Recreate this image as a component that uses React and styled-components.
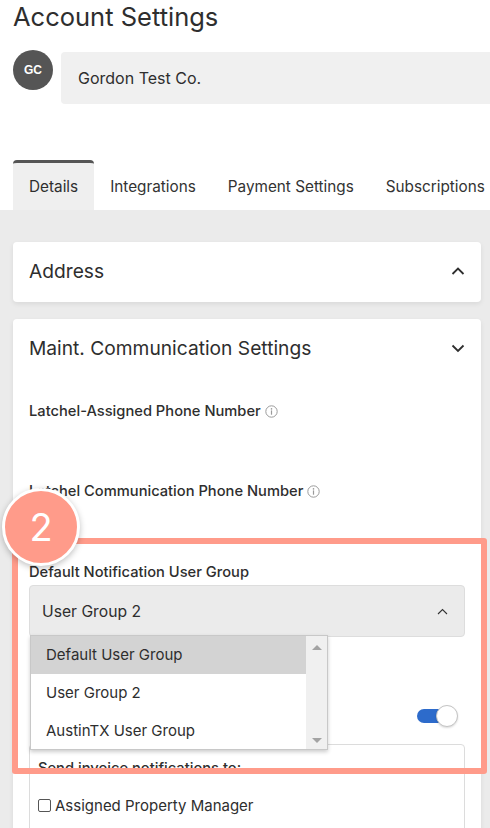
import styled, { createGlobalStyle } from 'styled-components';

const GlobalStyle = createGlobalStyle`
  html, body {
    margin: 0;
    padding: 0;
    background: #ebebeb;
  }
  body {
    font-family: Inter, "Noto Sans", sans-serif;
    color: #2e2e2e;
    overflow: hidden;
  }
`;

const Page = styled.div`
  width: 490px;
  height: 828px;
  overflow: hidden;
  position: relative;
  background: #ebebeb;
`;

const Top = styled.header`
  background: #fff;
  padding: 0 0 0 13px;
`;

const Title = styled.h1`
  margin: 0;
  font-size: 25.5px;
  line-height: 34px;
  font-weight: 400;
  color: #2e2e2e;
`;

const AccountRow = styled.div`
  display: flex;
  align-items: flex-start;
  gap: 8px;
  margin-top: 18px;
`;

const Avatar = styled.div`
  width: 40px;
  height: 40px;
  flex: none;
  margin-top: -2px;
  border-radius: 50%;
  background: #555;
  color: #fff;
  font-family: Arial, "Liberation Sans", sans-serif;
  font-weight: 700;
  font-size: 12px;
  display: flex;
  align-items: center;
  justify-content: center;
`;

const NameField = styled.div`
  flex: 1;
  height: 52px;
  background: #f0f0f0;
  border-radius: 4px 0 0 4px;
  display: flex;
  align-items: center;
  padding-left: 17px;
  font-size: 16px;
`;

const Tabs = styled.nav`
  display: flex;
  margin-top: 56px;
  height: 50px;
`;

const Tab = styled.div`
  display: flex;
  align-items: center;
  padding: 0 16px;
  font-size: 15.3px;
  color: ${(p) => (p.active ? '#2e2e2e' : '#333')};
  background: ${(p) => (p.active ? '#efefef' : 'transparent')};
  border-top: 3px solid ${(p) => (p.active ? '#555' : 'transparent')};
  border-radius: ${(p) => (p.active ? '4px 4px 0 0' : '0')};
  white-space: nowrap;
`;

const Body = styled.main`
  padding: 32px 9px 0 13px;
  display: flex;
  flex-direction: column;
  gap: 17px;
`;

const Card = styled.section`
  background: #fff;
  border-radius: 4px;
  box-shadow: 0 2px 5px rgba(0, 0, 0, 0.08);
  padding: 0 16px;
`;

const CardHeader = styled.div`
  display: flex;
  align-items: center;
  justify-content: space-between;
  height: 60px;
  padding-bottom: 2px;
  box-sizing: border-box;
  font-size: 19.2px;
  color: #2e2e2e;
`;

const Chevron = ({ up }) => (
  <svg width="14" height="10" viewBox="0 0 14 10">
    <polyline
      points={up ? '1.5,8 7,2.5 12.5,8' : '1.5,2.5 7,8 12.5,2.5'}
      fill="none"
      stroke="#2e2e2e"
      strokeWidth="1.8"
    />
  </svg>
);

const CardBody = styled.div`
  position: relative;
  padding-bottom: 40px;
`;

const Field = styled.div`
  padding-top: ${(p) => p.top}px;
  height: ${(p) => p.height}px;
`;

const Label = styled.div`
  display: flex;
  align-items: center;
  gap: 4px;
  font-size: 14.7px;
  line-height: 20px;
  font-weight: 500;
  color: #2e2e2e;
`;

const InfoIcon = () => (
  <svg width="13" height="13" viewBox="0 0 13 13">
    <circle cx="6.5" cy="6.5" r="5.7" fill="none" stroke="#9a9a9a" strokeWidth="1" />
    <circle cx="6.5" cy="3.9" r="0.8" fill="#9a9a9a" />
    <rect x="5.9" y="5.4" width="1.2" height="4.3" fill="#9a9a9a" />
  </svg>
);

const Select = styled.div`
  margin-top: 3px;
  height: 52px;
  box-sizing: border-box;
  background: #ebebeb;
  border: 1px solid #ddd;
  border-radius: 4px;
  display: flex;
  align-items: center;
  justify-content: space-between;
  padding: 0 16px 0 12px;
  font-size: 15.7px;
  color: #2e2e2e;
`;

const SmallChevron = () => (
  <svg width="11" height="7" viewBox="0 0 11 7">
    <polyline points="1,6 5.5,1.5 10,6" fill="none" stroke="#333" strokeWidth="1.1" />
  </svg>
);

const Listbox = styled.div`
  position: absolute;
  left: 30px;
  top: 635px;
  width: 298px;
  height: 115px;
  box-sizing: border-box;
  background: #fff;
  border: 1px solid #c8c8c8;
  box-shadow: 0 2px 4px rgba(0, 0, 0, 0.2);
  display: flex;
  z-index: 3;
`;

const Options = styled.div`
  flex: 1;
  display: flex;
  flex-direction: column;
`;

const Option = styled.div`
  height: 38px;
  display: flex;
  align-items: center;
  padding-left: 15px;
  font-size: 15px;
  color: #2e2e2e;
  background: ${(p) => (p.selected ? '#d3d3d3' : '#fff')};
`;

const Scrollbar = styled.div`
  width: 21px;
  background: #f0f0f0;
  display: flex;
  flex-direction: column;
  justify-content: space-between;
  align-items: center;
  padding: 9px 0 6px;
`;

const Arrow = styled.div`
  width: 0;
  height: 0;
  border-left: 5px solid transparent;
  border-right: 5px solid transparent;
  ${(p) =>
    p.up ? 'border-bottom: 5px solid #a3a3a3;' : 'border-top: 5px solid #a3a3a3;'}
`;

const ToggleRow = styled.div`
  display: flex;
  justify-content: flex-end;
  padding-right: 7px;
  margin-top: 68px;
`;

const Toggle = styled.div`
  position: relative;
  width: 41px;
  height: 22px;
  display: flex;
  align-items: center;
`;

const Track = styled.div`
  width: 34px;
  height: 14px;
  border-radius: 7px;
  background: #2d6bcb;
`;

const Knob = styled.div`
  position: absolute;
  right: 0;
  top: 0;
  width: 20px;
  height: 20px;
  border-radius: 50%;
  background: #fff;
  border: 1px solid #c4c4c4;
  box-shadow: 0 1px 2px rgba(0, 0, 0, 0.15);
`;

const NotifyBox = styled.div`
  margin-top: 17px;
  border: 1px solid #dcdcdc;
  border-radius: 4px;
  padding: 13px 8px 20px;
`;

const BoxTitle = styled.div`
  font-size: 14.7px;
  font-weight: 500;
  line-height: 20px;
`;

const CheckRow = styled.label`
  display: flex;
  align-items: center;
  gap: 4px;
  margin-top: 18px;
  font-size: 15px;
  color: #2e2e2e;
`;

const CheckBox = styled.span`
  width: 11px;
  height: 11px;
  border: 1px solid #555;
  border-radius: 2px;
  background: #fff;
`;

const Highlight = styled.div`
  position: absolute;
  left: 12px;
  top: 538px;
  width: 475px;
  height: 236px;
  box-sizing: border-box;
  border: 6px solid #ff9b8a;
  border-radius: 3px;
  pointer-events: none;
  z-index: 4;
`;

const StepBadge = styled.div`
  position: absolute;
  left: 2px;
  top: 488px;
  width: 78px;
  height: 78px;
  box-sizing: border-box;
  border-radius: 50%;
  background: #ff9b8a;
  border: 3px solid #fff;
  box-shadow: 0 2px 6px rgba(0, 0, 0, 0.25);
  color: #fff;
  font-family: Inter, sans-serif;
  font-size: 38px;
  display: flex;
  align-items: center;
  justify-content: center;
  z-index: 5;
`;

export default function App() {
  return (
    <Page>
      <GlobalStyle />
      <Top>
        <Title>Account Settings</Title>
        <AccountRow>
          <Avatar>GC</Avatar>
          <NameField>Gordon Test Co.</NameField>
        </AccountRow>
        <Tabs>
          <Tab active>Details</Tab>
          <Tab>Integrations</Tab>
          <Tab>Payment Settings</Tab>
          <Tab>Subscriptions</Tab>
        </Tabs>
      </Top>
      <Body>
        <Card>
          <CardHeader>
            Address
            <Chevron up />
          </CardHeader>
        </Card>
        <Card>
          <CardHeader>
            Maint. Communication Settings
            <Chevron />
          </CardHeader>
          <CardBody>
            <Field top={22} height={79}>
              <Label>
                Latchel-Assigned Phone Number <InfoIcon />
              </Label>
            </Field>
            <Field top={1} height={81}>
              <Label>
                Latchel Communication Phone Number <InfoIcon />
              </Label>
            </Field>
            <Label>Default Notification User Group</Label>
            <Select>
              User Group 2
              <SmallChevron />
            </Select>
            <ToggleRow>
              <Toggle>
                <Track />
                <Knob />
              </Toggle>
            </ToggleRow>
            <NotifyBox>
              <BoxTitle>Send invoice notifications to:</BoxTitle>
              <CheckRow>
                <CheckBox />
                Assigned Property Manager
              </CheckRow>
            </NotifyBox>
          </CardBody>
        </Card>
      </Body>
      <Listbox>
        <Options>
          <Option selected>Default User Group</Option>
          <Option>User Group 2</Option>
          <Option>AustinTX User Group</Option>
        </Options>
        <Scrollbar>
          <Arrow up />
          <Arrow />
        </Scrollbar>
      </Listbox>
      <Highlight />
      <StepBadge>2</StepBadge>
    </Page>
  );
}
